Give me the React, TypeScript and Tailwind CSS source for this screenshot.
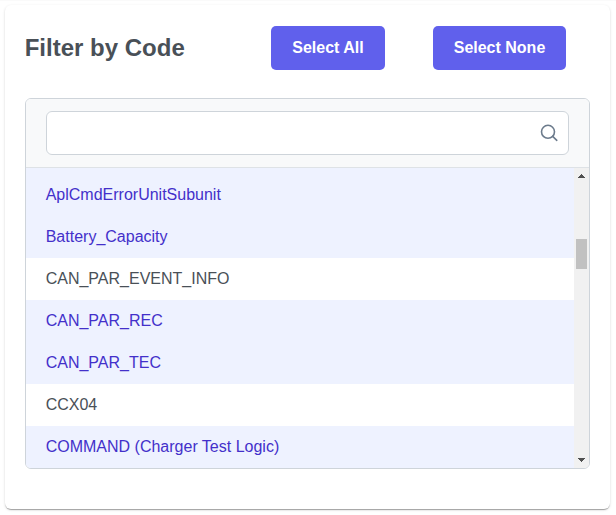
const items: { name: string; selected: boolean }[] = [
  { name: 'AplCmdErrorUnitSubunit', selected: true },
  { name: 'Battery_Capacity', selected: true },
  { name: 'CAN_PAR_EVENT_INFO', selected: false },
  { name: 'CAN_PAR_REC', selected: true },
  { name: 'CAN_PAR_TEC', selected: true },
  { name: 'CCX04', selected: false },
  { name: 'COMMAND (Charger Test Logic)', selected: true },
];

function ActionButton({ label, width }: { label: string; width: string }) {
  return (
    <button className={`h-11 rounded-[5px] bg-[#6060ec] text-base font-bold text-white ${width}`}>{label}</button>
  );
}

function SearchIcon() {
  return (
    <svg width="18" height="18" viewBox="0 0 18 18" fill="none" stroke="#6c7b8c" strokeWidth="1.6" strokeLinecap="round">
      <circle cx="8" cy="7.8" r="6.5" />
      <path d="M12.7 12.4 L16.8 16.3" />
    </svg>
  );
}

function Scrollbar() {
  return (
    <div className="flex w-[15px] shrink-0 flex-col items-center bg-[#f1f1f1]">
      <svg width="15" height="17" viewBox="0 0 15 17" shapeRendering="crispEdges"><path d="M7 6h1v1h1v1h1v1h1v1H4V9h1V8h1V7h1z" fill="#505050" /></svg>
      <div className="mt-[54px] h-[30px] w-[11px] bg-[#c1c1c1]" />
      <svg className="mt-auto" width="15" height="17" viewBox="0 0 15 17" shapeRendering="crispEdges"><path d="M4 7h7v1h-1v1H9v1H8v1H7v-1H6V9H5V8H4z" fill="#505050" /></svg>
    </div>
  );
}

export default function App() {
  return (
    <div className="h-[515px] w-[616px] border-t border-[#fafafa] bg-white px-[5px] pt-1 font-['Liberation_Sans',Arial,sans-serif]">
      <main className="h-[504px] w-[605px] rounded-[6px] bg-white px-5 pt-[21px] shadow-[0_2px_1px_-1px_rgba(0,0,0,0.2),0_1px_1px_0_rgba(0,0,0,0.14),0_1px_3px_0_rgba(0,0,0,0.12)]">
        <header className="flex h-11 items-center">
          <h1 className="-ml-[0.3px] w-[246.3px] text-2xl font-bold text-[#495057]">Filter by Code</h1>
          <ActionButton label="Select All" width="w-[114px]" />
          <div className="w-12" />
          <ActionButton label="Select None" width="w-[133px]" />
        </header>
        <section className="mt-7 h-[371px] w-[565px] overflow-hidden rounded-[6px] border border-[#ced4da]">
          <div className="h-[69px] border-b border-[#dee2e6] bg-[#f8f9fa] px-5 pt-3">
            <label className="flex h-11 items-center rounded-[6px] border border-[#ced4da] bg-white pr-[10px]">
              <input aria-label="Search codes" className="min-w-0 flex-1 px-3 outline-none" />
              <SearchIcon />
            </label>
          </div>
          <div className="flex h-[300px]">
            <ul className="flex flex-1 flex-col justify-end bg-[#eef2ff]">
              {items.map((item) => (
                <li
                  key={item.name}
                  className={`flex h-[42px] shrink-0 items-center pr-5 pl-[19.7px] text-base ${item.selected ? 'bg-[#eef2ff] text-[#4330ca]' : 'bg-white text-[#495057]'}`}
                >
                  {item.name}
                </li>
              ))}
            </ul>
            <Scrollbar />
          </div>
        </section>
      </main>
    </div>
  );
}
